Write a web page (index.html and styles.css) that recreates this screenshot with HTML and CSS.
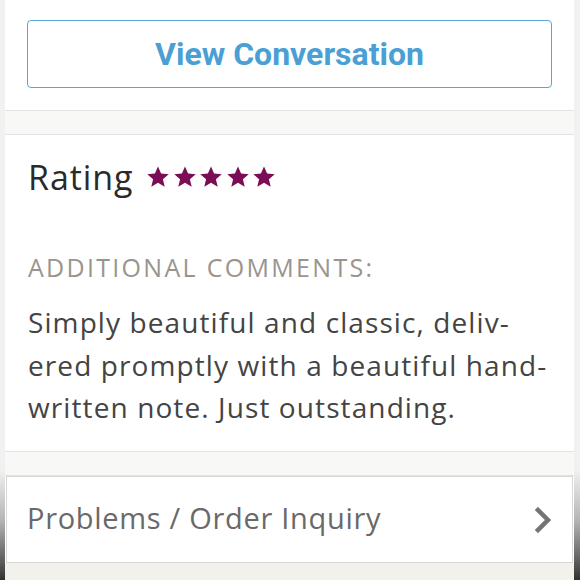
FILE: index.html
```html
<!DOCTYPE html>
<html lang="en">
<head>
<meta charset="utf-8">
<title>Order review</title>
<link rel="stylesheet" href="styles.css">
</head>
<body>
<div class="screen">
  <div class="edge"></div>
  <main class="content">
    <section class="actions">
      <a class="btn" href="#">View Conversation</a>
    </section>
    <div class="band"></div>
    <section class="review">
      <h2 class="rating">Rating
        <span class="stars">
          <svg class="star" viewBox="0 0 24 24"><path d="M12 1.5l3.1 7.1 7.6.6-5.8 5 1.8 7.5L12 17.7l-6.7 4 1.8-7.5-5.8-5 7.6-.6z"/></svg>
          <svg class="star" viewBox="0 0 24 24"><path d="M12 1.5l3.1 7.1 7.6.6-5.8 5 1.8 7.5L12 17.7l-6.7 4 1.8-7.5-5.8-5 7.6-.6z"/></svg>
          <svg class="star" viewBox="0 0 24 24"><path d="M12 1.5l3.1 7.1 7.6.6-5.8 5 1.8 7.5L12 17.7l-6.7 4 1.8-7.5-5.8-5 7.6-.6z"/></svg>
          <svg class="star" viewBox="0 0 24 24"><path d="M12 1.5l3.1 7.1 7.6.6-5.8 5 1.8 7.5L12 17.7l-6.7 4 1.8-7.5-5.8-5 7.6-.6z"/></svg>
          <svg class="star" viewBox="0 0 24 24"><path d="M12 1.5l3.1 7.1 7.6.6-5.8 5 1.8 7.5L12 17.7l-6.7 4 1.8-7.5-5.8-5 7.6-.6z"/></svg>
        </span>
      </h2>
      <h3 class="label">Additional Comments:</h3>
      <p class="comment">Simply beautiful and classic, deliv&shy;ered promptly with a beautiful hand-written note. Just outstanding.</p>
    </section>
    <div class="band"></div>
    <a class="row" href="#">
      <span>Problems / Order Inquiry</span>
      <svg class="chev" viewBox="0 0 18 26"><path d="M3 3l10 10-10 10"/></svg>
    </a>
    <div class="foot"></div>
  </main>
  <div class="edge"></div>
</div>
</body>
</html>
```
FILE: styles.css
```css
html, body {
  margin: 0;
  padding: 0;
  height: 100%;
}
body {
  font-family: "Open Sans", "Liberation Sans", sans-serif;
  background: #ffffff;
}
.screen {
  display: flex;
  height: 580px;
  overflow: hidden;
}
.edge {
  width: 5px;
  flex: none;
  background: linear-gradient(to bottom, #f1f1f1 0, #f1f1f1 470px, #b5b5b5 520px, #4a4a4a 570px, #303030 580px);
}
.edge:last-child {
  width: 6px;
}
.content {
  flex: 1;
  display: flex;
  flex-direction: column;
  background: #ffffff;
}
.actions {
  padding: 20px 22px 22px;
  border-bottom: 1px solid #e2e2e0;
}
.btn {
  display: flex;
  align-items: center;
  justify-content: center;
  height: 66px;
  border: 1px solid #5aa6d3;
  border-radius: 4px;
  font-family: "Roboto", sans-serif;
  font-weight: 700;
  font-size: 32px;
  color: #4a9fd4;
  text-decoration: none;
}
.band {
  height: 23px;
  background: #f8f8f7;
  border-bottom: 1px solid #e2e2e0;
}
.review {
  padding: 22px 23px 22px;
  border-bottom: 1px solid #e4e4e2;
  height: 272px;
}
.rating {
  margin: 0;
  display: flex;
  align-items: center;
  gap: 13px;
  font-size: 34px;
  font-weight: 400;
  letter-spacing: 0.9px;
  color: #2a2a2a;
  line-height: 40px;
}
.stars {
  display: flex;
  gap: 2.5px;
  color: #7b0c55;
}
.star {
  width: 24px;
  height: 24px;
  fill: currentColor;
}
.label {
  margin: 55px 0 0;
  font-size: 25px;
  font-weight: 500;
  letter-spacing: 2.3px;
  text-transform: uppercase;
  color: #9a948e;
  line-height: 30px;
}
.comment {
  margin: 19px 0 0;
  font-size: 28px;
  line-height: 42.5px;
  letter-spacing: 1.1px;
  color: #444444;
  hyphens: manual;
}
.row {
  display: flex;
  align-items: center;
  justify-content: space-between;
  height: 85px;
  margin: 0 1px 0 1px;
  padding: 0 19px 0 20px;
  border: 1px solid #d8d8d6;
  font-size: 29px;
  letter-spacing: 0.7px;
  line-height: 34px;
  color: #696969;
  text-decoration: none;
}
.row span {
  margin-top: -3px;
}
.chev {
  width: 18px;
  height: 26px;
  fill: none;
  stroke: #747474;
  stroke-width: 4.5;
  stroke-linecap: square;
}
.foot {
  flex: 1;
  background: #f3f1ec;
}
```
